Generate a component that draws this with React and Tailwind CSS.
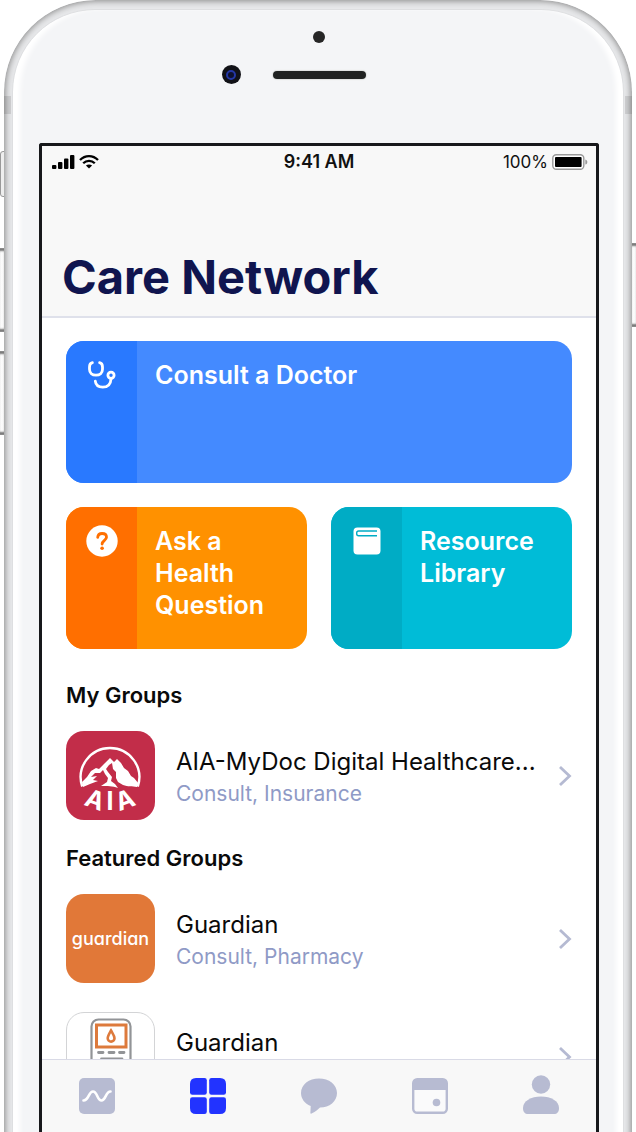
import React from "react";

function StatusBar() {
  return (
    <div className="grid grid-cols-3 items-center px-2 pt-1 text-[17px] leading-6 text-[#111]">
      <div className="flex items-center gap-1 pl-0.5">
        <svg width="23" height="16" viewBox="0 0 23 16" aria-hidden="true">
          <rect x="0" y="11" width="4.4" height="4" rx="1" />
          <rect x="6" y="8" width="4.4" height="7" rx="1" />
          <rect x="12" y="4.6" width="4.4" height="10.4" rx="1" />
          <rect x="18" y="1" width="4.4" height="14" rx="1" />
        </svg>
        <svg width="20" height="16" viewBox="0 0 20 16" fill="none" stroke="#000" strokeWidth="2.3" aria-hidden="true">
          <path d="M1 6C6 0.7 14 0.7 19 6" />
          <path d="M4.2 9.3C7.5 6 12.5 6 15.8 9.3" />
          <path d="M10 14.5L6.9 11.6C8.7 10 11.3 10 13.1 11.6Z" fill="#000" stroke="none" />
        </svg>
      </div>
      <div className="text-center text-[18px] font-semibold whitespace-nowrap">9:41 AM</div>
      <div className="flex items-center justify-end gap-1">
        <span>100%</span>
        <svg width="36" height="16" viewBox="0 0 36 16" aria-hidden="true">
          <rect x="0.8" y="0.8" width="31" height="14.4" rx="3.5" fill="#fff" stroke="#999" strokeWidth="1.4" />
          <rect x="3" y="3" width="26.6" height="10" rx="1" />
          <path d="M33.3 5.4C36 6.2 36 9.8 33.3 10.6Z" fill="#999" />
        </svg>
      </div>
    </div>
  );
}

function Stethoscope() {
  return (
    <svg width="28" height="28" viewBox="0 0 28 28" fill="none" stroke="#fff" strokeWidth="2.8" strokeLinecap="round" aria-hidden="true">
      <path d="M4.4 1.7C2 2.2 1.5 3.8 1.5 6V8.2C1.5 12 4.2 14.2 8 14.2S14.5 12 14.5 8.2V6C14.5 3.8 14 2.2 11.6 1.7" />
      <path d="M7.3 20.2C7.8 24.4 10.8 26.2 14.7 26.2C19.9 26.2 22.7 23 23 18" />
      <circle cx="23" cy="14.2" r="3.1" />
    </svg>
  );
}

function QuestionMark() {
  return (
    <svg width="32" height="32" viewBox="0 0 32 32" fill="none" aria-hidden="true">
      <circle cx="16" cy="16" r="15.7" fill="#fff" />
      <path d="M11.7 12.4C11.9 9.8 13.7 8.5 16.1 8.5C18.7 8.5 20.5 10 20.5 12.3C20.5 15.2 16.2 15.6 16.1 19" stroke="#ff6f00" strokeWidth="2.8" strokeLinecap="round" />
      <circle cx="16.1" cy="23.3" r="1.8" fill="#ff6f00" />
    </svg>
  );
}

function Book() {
  return (
    <svg width="28" height="28" viewBox="0 0 28 28" fill="none" aria-hidden="true">
      <rect x="0.5" y="0.5" width="27" height="27" rx="4" fill="#fff" />
      <path d="M24 4H5.6Q3.7 4 3.7 5.9V6.8Q3.7 8.7 5.6 8.7H24" stroke="#00acc5" strokeWidth="1.4" />
    </svg>
  );
}

function Tile({ icon, title, stripe, fill, wide }) {
  return (
    <button
      type="button"
      className={`flex h-[142px] overflow-hidden rounded-[18px] text-left ${fill} ${wide ? "col-span-2" : ""}`}
    >
      <span className={`flex h-full w-[71px] shrink-0 justify-center ${stripe}`}>
        <span className="mt-[18px] flex h-8 items-center">{icon}</span>
      </span>
      <span className="mt-[18px] pr-2 pl-[18px] text-[25px] leading-8 font-semibold text-white">{title}</span>
    </button>
  );
}

function AiaLogo() {
  return (
    <span className="block size-[89px] shrink-0 overflow-hidden rounded-[18px] bg-[#c22d49]">
      <svg viewBox="0 0 89 89" className="size-full" aria-hidden="true">
        <path d="M16.2 55.5A29.3 29.3 0 1 1 71.8 55.5" fill="none" stroke="#fff" strokeWidth="2.4" />
        <path
          d="M16 51L21 46L25 40L30 37L33 38L38 33L44 27L48 31L51 28L55 32L58 37L62 40L65 45L68 47L73 53L71 56C66 55 62 56 57 54L52 51L50 47L50 41L47 38L46 32L43 34L40 38L42 41L46 46L45 50L49 53L52 57C46 55 42 55 35 55L41 51L42 47L39 43L37 39L34 42L29 42L25 46L31 45L27 49L32 50L24 53L17 56Z"
          fill="#fff"
        />
        <g fill="#fff" className="font-[Inter,sans-serif] text-[25px] font-bold" textAnchor="middle">
          <text transform="translate(26 77) rotate(20)">A</text>
          <text transform="translate(44 79)">I</text>
          <text transform="translate(62 77) rotate(-20)">A</text>
        </g>
      </svg>
    </span>
  );
}

function GuardianLogo() {
  return (
    <span className="flex size-[89px] shrink-0 items-center justify-center rounded-[18px] bg-[#e17838] text-[18px] leading-6 font-medium text-white [font-feature-settings:'cv11']">
      guardian
    </span>
  );
}

function MeterLogo() {
  return (
    <span className="flex size-[89px] shrink-0 justify-center rounded-[18px] border border-[#d3d4d6] bg-white pt-[5px]">
      <svg width="42" height="80" viewBox="0 0 42 80" fill="none" aria-hidden="true">
        <rect x="1.5" y="1.5" width="39" height="76" rx="7" stroke="#929497" strokeWidth="2.2" />
        <rect x="6.5" y="7" width="29.5" height="22" stroke="#dd7a3c" strokeWidth="3" />
        <path d="M21 12.5C19 16 17.7 18 17.7 20.2A3.4 3.4 0 0 0 24.5 20.2C24.5 18 23 16 21 12.5Z" stroke="#dd7a3c" strokeWidth="2.6" />
        <path d="M8.5 34.5H13M19 34.5H24M29.5 34.5H34M11.5 41H32" stroke="#929497" strokeWidth="2.8" strokeLinecap="round" />
      </svg>
    </span>
  );
}

function GroupRow({ logo, name, tags }) {
  return (
    <a href="#group" className="flex items-center gap-[21px]">
      {logo}
      <span className="min-w-0 flex-1 pt-1">
        <span className="block truncate text-[24px] leading-8 text-[#0a0a0a]">{name}</span>
        <span className="block h-8 truncate text-[21px] leading-8 text-[#8f9ac6]">{tags}</span>
      </span>
      <svg width="14" height="22" viewBox="0 0 14 22" fill="none" stroke="#b5bad2" strokeWidth="2.8" className="shrink-0" aria-hidden="true">
        <path d="M2 2L11.5 11L2 20" />
      </svg>
    </a>
  );
}

const tabs = [
  {
    label: "Activity",
    icon: (
      <>
        <rect width="36" height="36" rx="5" fill="#b7bbd2" />
        <path d="M4.5 22.5C10 22.5 9.5 13.5 14 13.5C18.5 13.5 18 22.5 22.5 22.5C27 22.5 26.5 13.5 31.5 13.5" fill="none" stroke="#fff" strokeWidth="2.6" strokeLinecap="round" />
      </>
    ),
  },
  {
    label: "Care Network",
    icon: (
      <g fill="#2233ff">
        <path d="M6 0H14.5Q16.8 0 16.8 2.3V14.5Q16.8 16.8 14.5 16.8H2.3Q0 16.8 0 14.5V6Q0 0 6 0Z" />
        <path d="M21.5 0H30Q36 0 36 6V14.5Q36 16.8 33.7 16.8H21.5Q19.2 16.8 19.2 14.5V2.3Q19.2 0 21.5 0Z" />
        <path d="M2.3 19.2H14.5Q16.8 19.2 16.8 21.5V33.7Q16.8 36 14.5 36H6Q0 36 0 30V21.5Q0 19.2 2.3 19.2Z" />
        <path d="M21.5 19.2H33.7Q36 19.2 36 21.5V30Q36 36 30 36H21.5Q19.2 36 19.2 33.7V21.5Q19.2 19.2 21.5 19.2Z" />
      </g>
    ),
  },
  {
    label: "Messages",
    icon: (
      <path d="M18 0.5C28 0.5 36 6.5 36 15C36 23.5 28.5 29.5 19 29.5C17 31.5 14 34 10.5 35.5C9.5 36 9.3 35.3 9.4 34.5L9.7 28C3.5 25.5 0 20.5 0 15C0 6.5 8 0.5 18 0.5Z" fill="#b7bbd2" />
    ),
  },
  {
    label: "Calendar",
    icon: (
      <>
        <rect x="1.2" y="1.2" width="33.6" height="33.6" rx="4" fill="#fafafb" stroke="#b7bbd2" strokeWidth="2.4" />
        <path d="M1 12V5Q1 1 5 1H31Q35 1 35 5V12Z" fill="#b7bbd2" />
        <circle cx="24.5" cy="24.5" r="3.8" fill="#b7bbd2" />
      </>
    ),
  },
  {
    label: "Profile",
    icon: (
      <g fill="#b7bbd2">
        <circle cx="18" cy="6.5" r="9.2" />
        <path d="M18 18.5C28 18.5 36 23 36 30C36 34 34 36 31 36H5C2 36 0 34 0 30C0 23 8 18.5 18 18.5Z" />
      </g>
    ),
  },
];

function TabBar() {
  return (
    <nav className="grid h-[73px] shrink-0 grid-cols-5 border-t border-[#d9dae6] bg-[#f8f8f8] pt-[18px]">
      {tabs.map((tab) => (
        <button key={tab.label} type="button" aria-label={tab.label} className="flex justify-center">
          <svg width="36" height="36" viewBox="0 0 36 36" className="overflow-visible">
            {tab.icon}
          </svg>
        </button>
      ))}
    </nav>
  );
}

function SideButton({ className }) {
  return (
    <div
      className={`absolute w-3 rounded-[4px] border border-[#8b8b8b] bg-linear-to-r from-[#ddd] via-white to-[#ccc] shadow-[inset_0_3px_2px_-1px_#777,inset_0_-3px_2px_-1px_#777] ${className}`}
    />
  );
}

export default function App() {
  return (
    <div className="relative flex h-screen overflow-hidden bg-white px-1 font-[Inter,sans-serif]">
      <div className="absolute top-[151px] left-0 h-[46px] w-2 rounded-[3px] border border-[#999] bg-[#eee]" />
      <SideButton className="top-[248px] -left-1 h-[84px]" />
      <SideButton className="top-[351px] -left-1 h-[84px]" />
      <SideButton className="top-[243px] -right-1 h-[84px]" />

      <div className="absolute inset-x-1 top-0 -bottom-10 overflow-hidden rounded-t-[92px] bg-[#e7e8ea]">
        <div className="absolute inset-x-[8px] top-[9px] bottom-0 rounded-t-[83px] border border-[#dedfe1] bg-[#f4f5f7] shadow-[inset_9px_0_5px_-2px_#fff,inset_-9px_0_5px_-2px_#fff]" />
        <div className="absolute inset-0 rounded-t-[92px] shadow-[inset_0_0_6px_1px_#858585]" />
        <div className="absolute top-[96px] left-0 h-[18px] w-[7px] bg-black/10" />
        <div className="absolute top-[96px] right-0 h-[18px] w-[7px] bg-black/10" />
      </div>

      <div className="relative flex min-w-0 flex-1 flex-col pr-[33px] pl-[35px]">
        <div className="flex h-[143px] shrink-0 flex-col items-center pt-[31px]">
          <div className="size-3 rounded-full bg-[#262626]" />
          <div className="mt-[22px] grid w-full grid-cols-[1fr_93px_1fr] items-center">
            <div className="mr-8 flex size-[19px] items-center justify-center justify-self-end rounded-full bg-[#111217]">
              <div className="size-[10px] rounded-full border-2 border-[#2437a5] bg-[#0d1130]" />
            </div>
            <div className="h-2 rounded-full bg-[#202222] shadow-[0_0_1px_1px_#dfe2e0]" />
          </div>
        </div>

        <div className="flex min-h-0 flex-1 flex-col rounded-t-[3px] border-x-[3px] border-t-[3px] border-[#17181b] bg-white">
          <header className="h-[172px] shrink-0 border-b-2 border-[#dfe1eb] bg-[#f8f8f8]">
            <StatusBar />
            <h1 className="mt-[71px] pl-5 text-[47px] leading-16 font-bold whitespace-nowrap text-[#10154f]">Care Network</h1>
          </header>

          <main className="min-h-0 flex-1 overflow-hidden px-6 pt-[23px]">
            <div className="grid grid-cols-2 gap-6">
              <Tile wide title="Consult a Doctor" icon={<Stethoscope />} stripe="bg-[#2979ff]" fill="bg-[#448aff]" />
              <Tile title="Ask a Health Question" icon={<QuestionMark />} stripe="bg-[#ff6f00]" fill="bg-[#ff9100]" />
              <Tile title="Resource Library" icon={<Book />} stripe="bg-[#00acc5]" fill="bg-[#00bcd7]" />
            </div>

            <h2 className="mt-[30px] text-[22px] leading-8 font-semibold text-[#0a0a0a]">My Groups</h2>
            <div className="mt-5">
              <GroupRow logo={<AiaLogo />} name="AIA-MyDoc Digital Healthcare..." tags="Consult, Insurance" />
            </div>

            <h2 className="mt-[22px] text-[22px] leading-8 font-semibold text-[#0a0a0a]">Featured Groups</h2>
            <div className="mt-5 flex flex-col gap-[29px]">
              <GroupRow logo={<GuardianLogo />} name="Guardian" tags="Consult, Pharmacy" />
              <GroupRow logo={<MeterLogo />} name="Guardian" />
            </div>
          </main>
          <TabBar />
        </div>
      </div>
    </div>
  );
}
